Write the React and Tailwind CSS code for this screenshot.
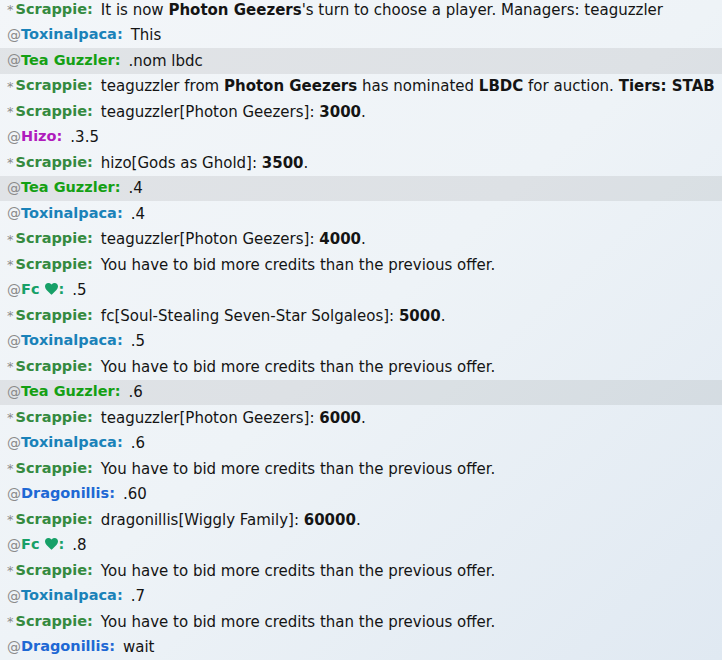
import React from 'react';

const USERS = {
  scrappie: { sym: '*', name: 'Scrappie', color: 'text-[#358a40]' },
  toxin: { sym: '@', name: 'Toxinalpaca', color: 'text-[#1a82b9]' },
  tea: { sym: '@', name: 'Tea Guzzler', color: 'text-[#14a014]', hl: true },
  hizo: { sym: '@', name: 'Hizo', color: 'text-[#b01cbd]' },
  fc: { sym: '@', name: 'Fc', color: 'text-[#17a068]', heart: true },
  dragon: { sym: '@', name: 'Dragonillis', color: 'text-[#1e68d4]' },
};

const TOO_LOW = 'You have to bid more credits than the previous offer.';

// message parts: strings are plain, [text] is bold
const LOG = [
  ['scrappie', ['It is now ', ['Photon Geezers'], "'s turn to choose a player. Managers: teaguzzler"]],
  ['toxin', ['This']],
  ['tea', ['.nom lbdc']],
  ['scrappie', ['teaguzzler from ', ['Photon Geezers'], ' has nominated ', ['LBDC'], ' for auction. ', ['Tiers: STAB']]],
  ['scrappie', ['teaguzzler[Photon Geezers]: ', ['3000'], '.']],
  ['hizo', ['.3.5']],
  ['scrappie', ['hizo[Gods as Ghold]: ', ['3500'], '.']],
  ['tea', ['.4']],
  ['toxin', ['.4']],
  ['scrappie', ['teaguzzler[Photon Geezers]: ', ['4000'], '.']],
  ['scrappie', [TOO_LOW]],
  ['fc', ['.5']],
  ['scrappie', ['fc[Soul-Stealing Seven-Star Solgaleos]: ', ['5000'], '.']],
  ['toxin', ['.5']],
  ['scrappie', [TOO_LOW]],
  ['tea', ['.6']],
  ['scrappie', ['teaguzzler[Photon Geezers]: ', ['6000'], '.']],
  ['toxin', ['.6']],
  ['scrappie', [TOO_LOW]],
  ['dragon', ['.60']],
  ['scrappie', ['dragonillis[Wiggly Family]: ', ['60000'], '.']],
  ['fc', ['.8']],
  ['scrappie', [TOO_LOW]],
  ['toxin', ['.7']],
  ['scrappie', [TOO_LOW]],
  ['dragon', ['wait']],
];

function Heart() {
  return (
    <svg viewBox="0 0 24 22" className="inline-block w-[13px] h-[12px] ml-[5px] mr-[1px] -mt-[2px] align-middle fill-current">
      <path d="M12 21.5 10.3 20C4.2 14.4 0 10.6 0 6.2 0 2.7 2.7 0 6.2 0c2 0 3.9.9 5.8 2.6C13.9.9 15.8 0 17.8 0 21.3 0 24 2.7 24 6.2c0 4.4-4.2 8.2-10.3 13.8z" />
    </svg>
  );
}

function ChatLine({ user, parts }) {
  const u = USERS[user];
  return (
    <div className={`h-[25.5px] shrink-0 flex items-center pl-[7px] whitespace-nowrap ${u.hl ? 'bg-black/[0.07]' : ''}`}>
      <span className={`text-[#8a8a8a] ${u.sym === '*' ? 'text-[13px] mr-[2px]' : 'text-[14px]'}`}>{u.sym}</span>
      <strong className={`font-bold text-[14.5px] ${u.color}`}>
        {u.name}
        {u.heart && <Heart />}:
      </strong>
      <span className="ml-[8px] text-[#141414]">
        {parts.map((p, i) =>
          Array.isArray(p) ? <b key={i} className="font-bold">{p[0]}</b> : <span key={i}>{p}</span>
        )}
      </span>
    </div>
  );
}

export default function App() {
  return (
    <div className="w-[722px] h-[660px] overflow-hidden flex flex-col justify-end bg-gradient-to-br from-[#f3f6f9] via-[#eef3f7] to-[#e0e9f2] text-[15px] font-['DejaVu_Sans',Verdana,sans-serif]">
      {LOG.map(([user, parts], i) => (
        <ChatLine key={i} user={user} parts={parts} />
      ))}
    </div>
  );
}
